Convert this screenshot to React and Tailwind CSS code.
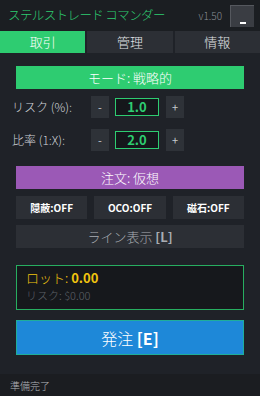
import { useState } from "react";

const font = { fontFamily: '"Noto Sans CJK JP", "Noto Sans", sans-serif' };

function Stepper({ label, value }) {
  return (
    <div className="flex items-center h-[22px] px-3">
      <span className="w-[79px] text-[12px] text-[#d0d3d8] font-light">{label}</span>
      <button className="w-[18px] h-[22px] bg-[#2e3238] text-[#c8cbd0] text-[11px] leading-none">-</button>
      <div className="ml-[6px] w-[44px] h-[18px] border border-[#2ecc71] bg-[#15171b] flex items-center justify-center text-[#2ecc71] text-[13px] font-bold">
        {value}
      </div>
      <button className="ml-[7px] w-[18px] h-[22px] bg-[#2e3238] text-[#c8cbd0] text-[11px] leading-none">+</button>
    </div>
  );
}

export default function App() {
  const [tab, setTab] = useState(0);
  const tabs = ["取引", "管理", "情報"];

  return (
    <div className="w-[260px] h-[396px] bg-[#1f2228] flex flex-col" style={font}>
      {/* header */}
      <div className="h-[31px] bg-[#1b1e22] flex items-center pl-2 pr-[6px]">
        <span className="text-[#2ecc71] text-[12.5px] font-light tracking-[-0.6px] whitespace-nowrap">ステルストレード コマンダー</span>
        <span className="ml-auto text-[10px] text-[#8a8e95] font-light">v1.50</span>
        <button className="ml-[8px] w-[24px] h-[22px] bg-[#3a3d43] border-l border-t border-[#55585e] flex items-end justify-center pb-[3px]">
          <span className="w-[6px] h-[2px] bg-white" />
        </button>
      </div>

      {/* tabs */}
      <div className="flex gap-[2px] h-[22px]">
        {tabs.map((t, i) => (
          <button
            key={t}
            onClick={() => setTab(i)}
            className={`flex-1 text-[13px] font-light ${tab === i ? "bg-[#2ecc71] text-white" : "bg-[#2c2f35] text-[#e0e2e5]"}`}
          >
            {t}
          </button>
        ))}
      </div>

      <div className="flex flex-col px-4 pt-[13px]">
        <div className="h-[23px] bg-[#2ecc71] text-white text-[13px] font-light flex items-center justify-center">モード: 戦略的</div>
      </div>

      <div className="flex flex-col gap-[11px] mt-[7px]">
        <Stepper label="リスク (%):" value="1.0" />
        <Stepper label="比率 (1:X):" value="2.0" />
      </div>

      <div className="flex flex-col px-4 mt-[15px]">
        <div className="h-[23px] bg-[#9b59b6] text-white text-[13px] font-light flex items-center justify-center">注文: 仮想</div>
        <div className="grid grid-cols-3 gap-[7px] mt-[7px]">
          {["隠蔽:OFF", "OCO:OFF", "磁石:OFF"].map((b) => (
            <button key={b} className="h-[23px] bg-[#2c2f35] text-white text-[10px] font-bold">{b}</button>
          ))}
        </div>
        <button className="mt-[6px] h-[23px] bg-[#2c2f35] text-[#a9adb3] text-[13px] font-light">
          ライン表示 <span className="font-bold">[L]</span>
        </button>

        <div className="mt-[17px] h-[45px] border border-[#27ae60] bg-[#16181c] px-[9px] pt-[3px] flex flex-col">
          <span className="text-[#f1c40f] text-[13px] leading-[18px] font-light">
            ロット: <span className="font-bold">0.00</span>
          </span>
          <span className="text-[#5d6167] text-[11px] leading-[16px] font-light">リスク: $0.00</span>
        </div>

        <button className="mt-[10px] h-[35px] bg-[#1e88d8] border border-[#1fae9a] text-white text-[16px] font-light">
          発注 <span className="font-bold">[E]</span>
        </button>
      </div>

      <div className="mt-auto h-[22px] bg-[#1b1d21] flex items-center px-[10px] text-[10px] text-[#b4b7bc] font-light">準備完了</div>
    </div>
  );
}
